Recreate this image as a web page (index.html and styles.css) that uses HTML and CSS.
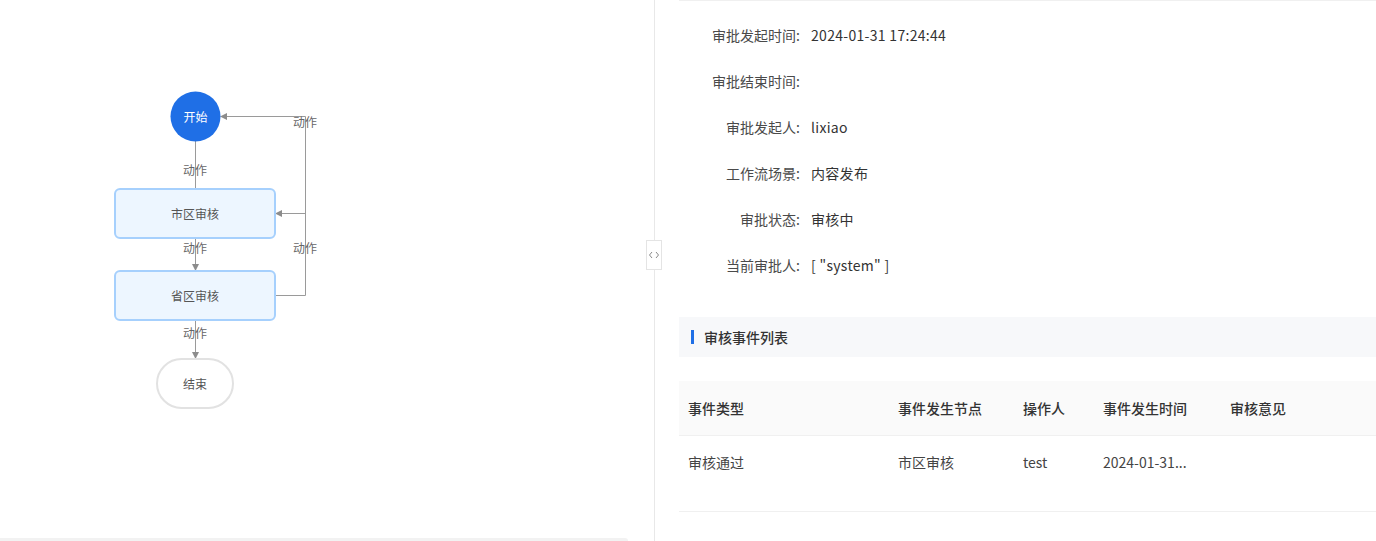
FILE: index.html
```html
<!DOCTYPE html>
<html lang="zh">
<head>
<meta charset="utf-8">
<title>审批详情</title>
<link rel="stylesheet" href="styles.css">
</head>
<body>
<div class="page">
  <div class="left">
    <svg class="flow" width="654" height="538" viewBox="0 0 654 538" xmlns="http://www.w3.org/2000/svg">
      <g class="edges" fill="none" stroke="#9a9a9a" stroke-width="1">
        <line x1="195.5" y1="141" x2="195.5" y2="189"/>
        <line x1="195.5" y1="238" x2="195.5" y2="266"/>
        <line x1="195.5" y1="320" x2="195.5" y2="354"/>
        <polyline points="275,295.5 305.5,295.5 305.5,116.5 225,116.5"/>
        <line x1="305.5" y1="213.5" x2="280" y2="213.5"/>
      </g>
      <g class="arrows" fill="#8c8c8c">
        <polygon points="220,116.5 227,113 227,120"/>
        <polygon points="275,213.5 282,210 282,217"/>
        <polygon points="195.5,271 192,264 199,264"/>
        <polygon points="195.5,359 192,352 199,352"/>
      </g>
      <circle cx="195.5" cy="116.5" r="25" fill="#1f6fe6"/>
      <rect x="115" y="189" width="160" height="49" rx="5" fill="#edf6ff" stroke="#a6d0fd" stroke-width="2"/>
      <rect x="115" y="271" width="160" height="49" rx="5" fill="#edf6ff" stroke="#a6d0fd" stroke-width="2"/>
      <rect x="157" y="359" width="76" height="49" rx="24.5" fill="#ffffff" stroke="#e2e2e2" stroke-width="2"/>
      <g class="ntext">
        <text x="195.5" y="116" class="t-start">开始</text>
        <text x="195" y="213" class="t-node">市区审核</text>
        <text x="195" y="295" class="t-node">省区审核</text>
        <text x="195" y="383" class="t-node">结束</text>
        <text x="195" y="169.5" class="t-edge">动作</text>
        <text x="195" y="247.5" class="t-edge">动作</text>
        <text x="195" y="332.5" class="t-edge">动作</text>
        <text x="305" y="121.5" class="t-edge">动作</text>
        <text x="305" y="247.5" class="t-edge">动作</text>
      </g>
    </svg>
    <div class="hscroll"></div>
  </div>

  <div class="divider">
    <div class="toggle">
      <svg width="12" height="10" viewBox="0 0 12 10" xmlns="http://www.w3.org/2000/svg">
        <polyline points="4,2 1.5,5 4,8" fill="none" stroke="#8a8a8a" stroke-width="1"/>
        <polyline points="8,2 10.5,5 8,8" fill="none" stroke="#8a8a8a" stroke-width="1"/>
      </svg>
    </div>
  </div>

  <div class="right">
    <div class="desc">
      <div class="row"><span class="label">审批发起时间:</span><span class="value">2024-01-31 17:24:44</span></div>
      <div class="row"><span class="label">审批结束时间:</span><span class="value"></span></div>
      <div class="row"><span class="label">审批发起人:</span><span class="value">lixiao</span></div>
      <div class="row"><span class="label">工作流场景:</span><span class="value">内容发布</span></div>
      <div class="row"><span class="label">审批状态:</span><span class="value">审核中</span></div>
      <div class="row"><span class="label">当前审批人:</span><span class="value">[ "system" ]</span></div>
    </div>

    <div class="section-title"><span class="bar"></span><span>审核事件列表</span></div>

    <table class="events">
      <colgroup>
        <col class="c1"><col class="c2"><col class="c3"><col class="c4"><col class="c5">
      </colgroup>
      <thead>
        <tr><th>事件类型</th><th>事件发生节点</th><th>操作人</th><th>事件发生时间</th><th>审核意见</th></tr>
      </thead>
      <tbody>
        <tr><td>审核通过</td><td>市区审核</td><td>test</td><td>2024-01-31...</td><td></td></tr>
      </tbody>
    </table>
  </div>
</div>
</body>
</html>
```
FILE: styles.css
```css
html, body {
  margin: 0;
  padding: 0;
  background: #ffffff;
}
body {
  font-family: "Noto Sans CJK SC", "Noto Sans", sans-serif;
  font-size: 14px;
  color: #333333;
}
.page {
  display: flex;
  width: 1376px;
  height: 541px;
  overflow: hidden;
}
.left {
  width: 654px;
  height: 541px;
  display: flex;
  flex-direction: column;
  flex: none;
}
.flow {
  display: block;
  flex: none;
}
.flow text {
  font-family: "Noto Sans CJK SC", "Noto Sans", sans-serif;
  text-anchor: middle;
  dominant-baseline: central;
  font-size: 12px;
}
.t-start { fill: #ffffff; }
.t-node { fill: #555555; }
.t-edge { fill: #666666; }
.hscroll {
  margin-top: auto;
  width: 628px;
  height: 3px;
  background: #f2f2f2;
  border-radius: 0 3px 0 0;
}
.divider {
  width: 1px;
  background: #e8e8e8;
  flex: none;
  position: relative;
}
.toggle {
  position: absolute;
  left: -8px;
  top: 240px;
  width: 14px;
  height: 28px;
  background: #ffffff;
  border: 1px solid #e4e4e4;
  display: flex;
  align-items: center;
  justify-content: center;
}
.right {
  flex: 1;
  padding-left: 24px;
  min-width: 0;
}
.desc {
  border-top: 1px solid #f0f0f0;
  padding-top: 11px;
}
.row {
  display: flex;
  height: 46px;
  align-items: center;
  line-height: 22px;
}
.label {
  width: 121px;
  text-align: right;
  color: #4a4a4a;
  flex: none;
}
.value {
  margin-left: 11px;
  color: #333333;
  letter-spacing: 0.3px;
}
.section-title {
  margin-top: 29px;
  height: 40px;
  background: #f7f8fa;
  display: flex;
  align-items: center;
  font-weight: 500;
  color: #333333;
  padding-left: 12px;
}
.section-title .bar {
  width: 3px;
  height: 14px;
  background: #1f6fe6;
  margin-right: 10px;
}
.events {
  margin-top: 24px;
  width: 100%;
  border-collapse: collapse;
  table-layout: fixed;
}
.c1 { width: 210px; }
.c2 { width: 125px; }
.c3 { width: 80px; }
.c4 { width: 127px; }
.c5 { width: auto; }
.events th {
  height: 54px;
  background: #fafafa;
  text-align: left;
  font-weight: 500;
  color: #333333;
  padding: 0 9px;
  border-bottom: 1px solid #f0f0f0;
  line-height: 22px;
}
.events td {
  height: 76px;
  vertical-align: top;
  padding: 15px 9px 0;
  box-sizing: border-box;
  line-height: 22px;
  color: #444444;
  border-bottom: 1px solid #f0f0f0;
  white-space: nowrap;
  overflow: hidden;
}
```
